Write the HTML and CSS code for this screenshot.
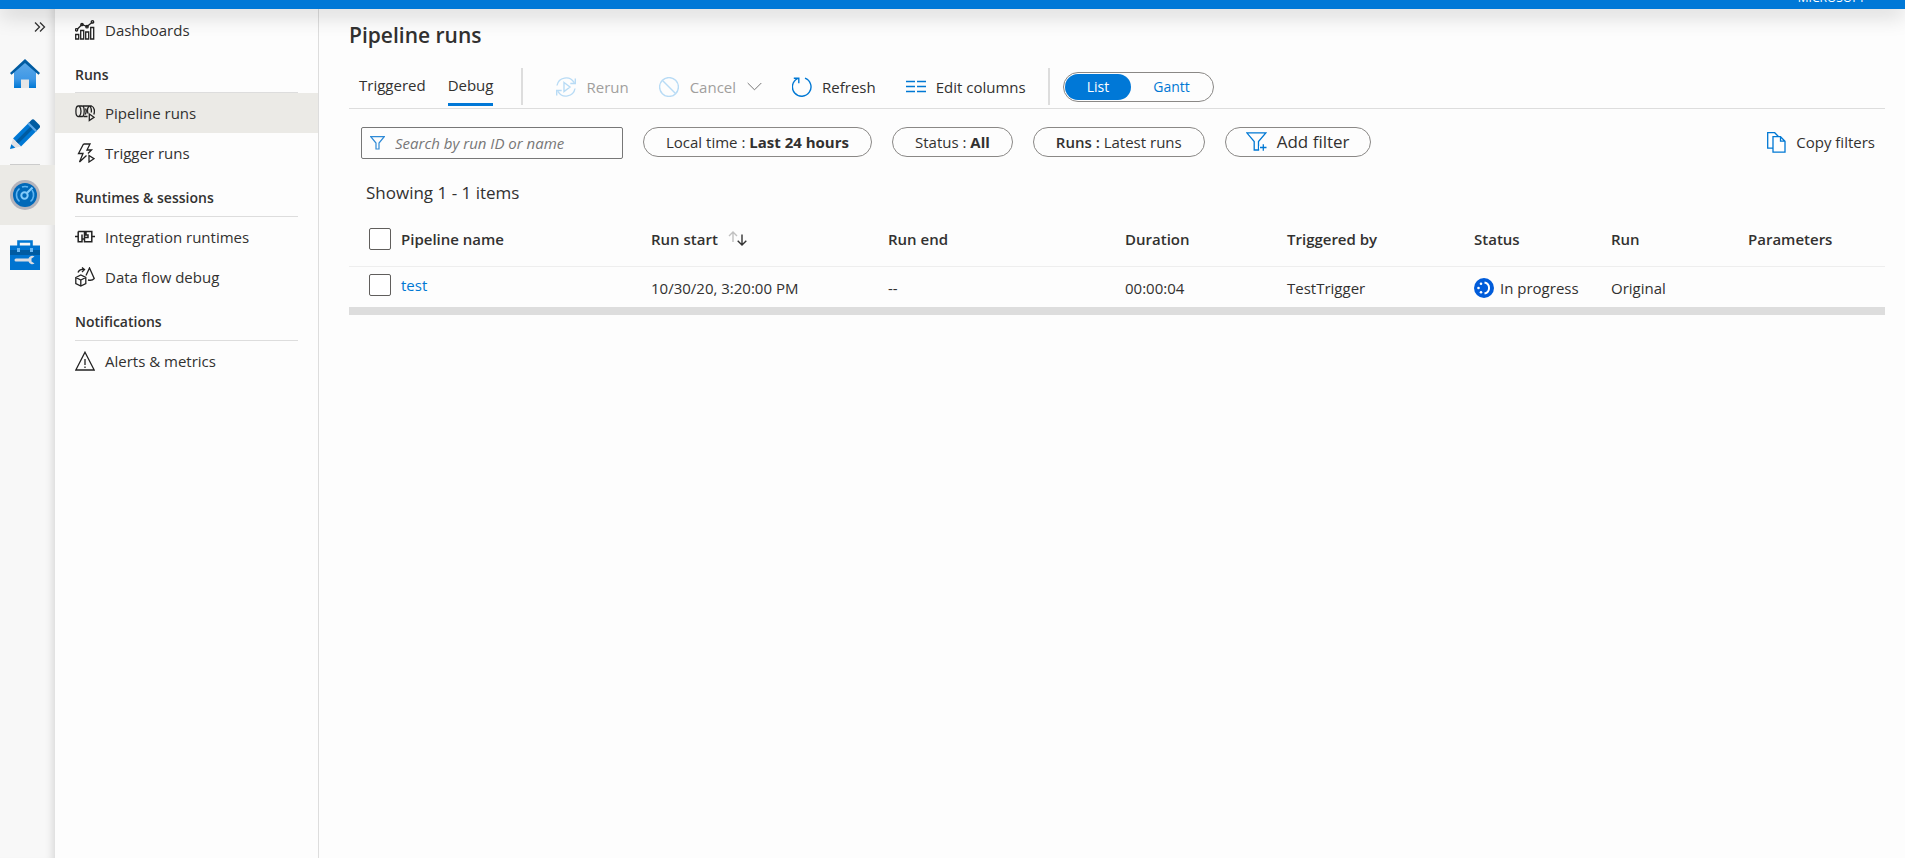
FILE: index.html
```html
<!DOCTYPE html>
<html lang="en">
<head>
<meta charset="utf-8">
<title>Pipeline runs</title>
<link rel="stylesheet" href="styles.css">
</head>
<body>
<header class="topbar"><span class="tenant">MICROSOFT</span></header>
<div class="shell">
  <nav class="rail" aria-label="Hubs">
    <button class="expand" aria-label="Expand"><svg width="12" height="10" viewBox="0 0 12 10" fill="none" stroke="#333" stroke-width="1.3"><path d="M1 .5 5.500 5 1 9.500M6 .5 10.500 5 6 9.500"/></svg></button>
    <a class="hub" href="#" aria-label="Home">
      <svg width="30" height="30" viewBox="0 0 30 30"><defs><linearGradient id="hg" x1="0" y1="0" x2="0" y2="1"><stop offset="0" stop-color="#5ea9e8"/><stop offset=".65" stop-color="#3f98e6"/><stop offset="1" stop-color="#0078d4"/></linearGradient></defs><path d="M4 12 15 3l11 9v17H4z" fill="url(#hg)"/><path d="M0 14 15 0l15 14-1.500 1.800L15 4 1.500 15.800z" fill="#005ba1"/><path d="M11 20.500h8V29h-8z" fill="#e6e6e6"/></svg>
    </a>
    <a class="hub" href="#" aria-label="Author">
      <svg width="30" height="30" viewBox="0 0 30 30"><path d="M3 19.500 19 3.500l8 8L11 27.500z" fill="#0078d4"/><path d="M5.800 22.300 21.800 6.300l2.400 2.400L8.200 24.700z" fill="#005ba1"/><path d="M18 4.500 21.200 1.200a2.500 2.500 0 0 1 3.500 0l4.500 4.500a2.500 2.500 0 0 1 0 3.500L26 12.500z" fill="#005ba1"/><path d="M17.500 5 19 3.500l8 8-1.500 1.500z" fill="#5ea9e8"/><path d="M3 19.500 11 27.500 0 30z" fill="#e0e0e4"/><path d="m1.300 25.300 4 3.500L0 30z" fill="#0078d4"/></svg>
    </a>
    <div class="rail-line"></div>
    <a class="hub hub-active" href="#" aria-label="Monitor">
      <svg width="30" height="30" viewBox="0 0 30 30" fill="none"><circle cx="15" cy="15" r="15" fill="#b4b4bc"/><circle cx="15" cy="15" r="12" fill="#0068b8"/><path d="M9.500 21.500a8.500 8.500 0 0 1 0-13M12 7a8.500 8.500 0 0 1 6 0M22 10a8.500 8.500 0 0 1-1.500 11.500" stroke="#5fb4f0" stroke-width="1.600"/><circle cx="14.500" cy="15.500" r="3.200" stroke="#83cbfa" stroke-width="2"/><path d="m17 13 5.500-5.500" stroke="#83cbfa" stroke-width="2.200"/></svg>
    </a>
    <a class="hub" href="#" aria-label="Manage">
      <svg width="30" height="30" viewBox="0 0 30 30"><path d="M8.500 6V1.500h13V6" fill="none" stroke="#0078d4" stroke-width="2.600"/><path d="M0 5.500h30V30H0z" fill="#0074d0"/><path d="M0 10h30v5H0z" fill="#005ba1"/><path d="M7 8h3v4H7zM20 8h3v4h-3z" fill="#6db8f2"/><path d="M6 18.500h12.500a4 4 0 0 1 6-2l-3 2v3l3 2a4 4 0 0 1-6-2H6a1.500 1.500 0 0 1 0-3z" fill="#d9dce2"/></svg>
    </a>
  </nav>

  <nav class="side" aria-label="Monitor">
    <a class="item" href="#"><svg class="ico" viewBox="0 0 20 20"><path d="M.7 14.500h3V19h-3zM5.700 10.500h3V19h-3zM10.700 12h3v7h-3zM15.700 7.500h3V19h-3z"/><path d="M2 9.500 7 4.500l5 2L17.500 2"/><circle cx="1.500" cy="9.800" r="1.200"/><circle cx="7" cy="4.500" r="1.200"/><circle cx="12" cy="6.700" r="1.200"/><circle cx="17.500" cy="1.900" r="1.200"/></svg>Dashboards</a>
    <h2 class="group group-first">Runs</h2>
    <a class="item item-active" href="#"><svg class="ico" viewBox="0 0 20 20"><path d="M3 3C.2 3.500.2 13 3 13.500h3M3 3h4.500C10 4 9.500 12.500 7.500 13.500H5M4.500 3.500c2 2 2 7.500 0 9.500M8 3h6.500M10.500 5.500c1 2 .8 4-.2 6M8.500 13.500h4M14.500 3c-2 1.500-2.300 5-1.500 7.500M14 3h2.500c3 1 3.500 5.500 2.300 8.500M15.300 3.500c1 1.800 1.300 3.500 1 6"/><path d="m14.300 11 4.700 3.300-4.700 3.200z"/></svg>Pipeline runs</a>
    <a class="item" href="#"><svg class="ico" viewBox="0 0 20 20"><path d="M8.500 1H15l-3 6h4.500L13 10.500M8.500 1l-5 9.500h4.500L4.500 19l7-6.500"/><path d="m14 12.500 5 3.200-5 3.300z"/></svg>Trigger runs</a>
    <h2 class="group">Runtimes &amp; sessions</h2>
    <a class="item" href="#"><svg class="ico" viewBox="0 0 20 20"><path d="M0 9.500h3M17 9.500h3M3.200 4.500h6.300v6H13V8h-2V4.500h5.800v10.300H9.500V12H7V7.500M3.200 4.500v10.300H7V12" stroke-width="1.500"/></svg>Integration runtimes</a>
    <a class="item" href="#"><svg class="ico" viewBox="0 0 20 20"><path d="M.8 10.500 5.800 8l5 2.500v6L5.800 19l-5-2.500zM.8 10.500l5 2.500 5-2.500M5.800 13v6M3 5.500C4 2.500 6 2 9 2.500M7 .5l2.500 2L7 5M11 8.500 14.500 1l4.700 10.500c-1.200 1.500-4 2-6.200 1.500"/></svg>Data flow debug</a>
    <h2 class="group">Notifications</h2>
    <a class="item" href="#"><svg class="ico" viewBox="0 0 20 20"><path d="M10 1.200 19.200 19H.8zM10 8v6M10 15.500v1.500"/></svg>Alerts &amp; metrics</a>
  </nav>

  <main class="main">
    <h1 class="title">Pipeline runs</h1>
    <div class="toolbar">
      <button class="tab">Triggered</button>
      <button class="tab tab-active">Debug</button>
      <span class="sep"></span>
      <button class="cmd cmd-rerun" disabled><svg class="cico" viewBox="0 0 20 20"><path d="M1 8.500A9.200 9.200 0 0 1 18 5.500M19 11.500A9.200 9.200 0 0 1 2 14.500M19.300 1.500v5h-5M.7 18.500v-5h5M8 5.500l6 4.500-6 4.500z"/></svg>Rerun</button>
      <button class="cmd cmd-cancel" disabled><svg class="cico" viewBox="0 0 20 20"><circle cx="10" cy="10" r="9.400"/><path d="m3.500 3.500 13 13"/></svg>Cancel<svg class="chev" width="15" height="9" viewBox="0 0 15 9"><path d="m.7 1 6.800 6.800L14.300 1" fill="none" stroke="#777"/></svg></button>
      <button class="cmd"><svg class="cico" viewBox="0 0 20 20"><path d="M13 1.200a9.300 9.300 0 1 1-7.500.4M1.800 1.200h5v5"/></svg>Refresh</button>
      <button class="cmd cmd-edit"><svg class="cico cico-wide" viewBox="0 0 20 20"><path d="M0 4.500h9M11 4.500h9M0 9.500h9M11 9.500h9M0 14.500h9M11 14.500h9"/></svg>Edit columns</button>
      <span class="sep"></span>
      <div class="toggle"><button class="opt opt-on">List</button><button class="opt">Gantt</button></div>
    </div>
    <div class="filters">
      <label class="search"><svg width="15" height="14" viewBox="0 0 15 14"><path d="M.8.700h13.400L9 7v6H6V7z" fill="none" stroke="#2f8ad6" stroke-width="1.200"/></svg><input type="text" placeholder="Search by run ID or name" aria-label="Search by run ID or name"></label>
      <button class="pill">Local time : <b>Last 24 hours</b></button>
      <button class="pill">Status : <b>All</b></button>
      <button class="pill"><span class="semi">Runs : </span>Latest runs</button>
      <button class="pill pill-add"><svg width="21" height="20" viewBox="0 0 21 20" fill="none" stroke="#0078d4" stroke-width="1.300"><path d="M.8.800h19L12.500 9.500V18H8.200V9.500z"/><path d="M13 15.500h8M17 11.500v8" stroke="#fdfdfd" stroke-width="3"/><path d="M14 15.500h6.500M17.300 12.200v6.600"/></svg>Add filter</button>
      <button class="copy"><svg width="19" height="21" viewBox="0 0 19 21" fill="#fff" stroke="#0078d4" stroke-width="1.300"><path d="M.7.700h7l4.500 4.500v11H.7z"/><path d="M6 4.700h7.500l4.500 4.500v11H6zM13.500 4.700v4.500H18" /></svg>Copy filters</button>
    </div>
    <p class="count">Showing 1 - 1 items</p>
    <table class="grid">
      <colgroup><col class="c-name"><col class="c-date"><col class="c-date"><col class="c-dur"><col class="c-trig"><col class="c-end"><col class="c-end"><col class="c-end"></colgroup>
      <thead><tr>
        <th><div class="name"><input class="box" type="checkbox" aria-label="Select all">Pipeline name</div></th>
        <th><div class="sort">Run start<svg width="19" height="15" viewBox="0 0 19 15" fill="none" stroke-width="1.400"><path d="M5 11V1M1 5l4-4 4 4" stroke="#c0c0c0"/><path d="M14 3.500V14M9.700 9.700 14 14l4.300-4.300" stroke="#333"/></svg></div></th>
        <th>Run end</th><th>Duration</th><th>Triggered by</th><th>Status</th><th>Run</th><th>Parameters</th>
      </tr></thead>
      <tbody><tr>
        <td class="first"><div class="name"><input class="box" type="checkbox" aria-label="Select test"><a href="#">test</a></div></td>
        <td>10/30/20, 3:20:00 PM</td><td>--</td><td>00:00:04</td><td>TestTrigger</td>
        <td><div class="status"><svg width="20" height="20" viewBox="0 0 20 20"><circle cx="10" cy="10" r="10" fill="#015cda"/><path d="M10.500 4.500a5.600 5.600 0 0 1 0 11" fill="none" stroke="#fff" stroke-width="2"/><circle cx="7" cy="5.800" r="1.300" fill="#fff"/><circle cx="4.500" cy="10" r="1.300" fill="#fff"/><circle cx="7" cy="14.200" r="1.300" fill="#fff"/></svg>In progress</div></td>
        <td>Original</td><td></td>
      </tr></tbody>
    </table>
  </main>
</div>
</body>
</html>
```
FILE: styles.css
```css
* { box-sizing: border-box; }
body {
  margin: 0;
  min-height: 100vh;
  display: flex;
  flex-direction: column;
  background: #fdfdfd;
  color: #323130;
  font: 15px/20px "Segoe UI", "Open Sans", sans-serif;
}
button { font: inherit; color: inherit; background: none; border: 0; padding: 0; }
a { text-decoration: none; color: inherit; }
svg { flex: none; display: block; }

.topbar {
  position: relative;
  z-index: 2;
  height: 9px;
  padding-right: 40px;
  display: flex;
  justify-content: flex-end;
  align-items: flex-end;
  overflow: hidden;
  background: #0078d7;
  color: #fff;
  font-size: 12px;
  line-height: 18px;
  box-shadow: 0 4px 22px rgba(0, 0, 0, .28);
}
.tenant { padding-bottom: 2px; }

.shell { flex: 1; display: flex; }

.rail {
  flex: none;
  width: 55px;
  display: flex;
  flex-direction: column;
  background: #f8f8f8;
  box-shadow: inset -9px 0 9px -7px rgba(0, 0, 0, .14);
}
.expand { height: 35px; padding: 0 10px 0 34px; display: flex; align-items: center; }
.hub { height: 60px; padding-left: 10px; display: flex; align-items: center; }
.hub-active { background: #ebeae6; }
.rail-line { width: 30px; height: 1px; margin-left: 10px; background: #ccc; }

.side {
  flex: none;
  width: 264px;
  padding-top: 1px;
  border-right: 1px solid #ddd;
}
.item { height: 40px; padding-left: 20px; display: flex; align-items: center; gap: 10px; }
.item-active { background: #ebeae6; }
.ico { width: 20px; height: 20px; fill: none; stroke: #222; stroke-width: 1.3; }
.group {
  height: 44px;
  margin: 0 20px;
  padding-top: 15px;
  border-bottom: 1px solid #ddd;
  font-size: 14px;
  font-weight: 600;
}
.group-first { height: 43px; }

.main { flex: 1; min-width: 0; padding: 12px 20px 0 30px; }
.title { margin: 0; font-size: 21px; line-height: 28px; font-weight: 600; }

.toolbar {
  height: 60px;
  display: flex;
  align-items: center;
  padding: 16px 0 0 10px;
  border-bottom: 1px solid #ddd;
}
.tab { height: 38px; margin-right: 22px; border-bottom: 3px solid transparent; }
.tab-active { border-color: #0078d7; }
.sep { width: 2px; height: 37px; margin: 0 13px 0 6px; background: #ddd; }
.cmd { display: flex; align-items: center; gap: 10px; margin-right: 30px; }
.cmd-rerun { margin-left: 20px; }
.cmd-cancel { gap: 11px; }
.cmd:disabled { color: #a19f9d; }
.cmd-edit { margin-right: 16px; }
.cico { width: 20px; height: 20px; fill: none; stroke: #0078d4; stroke-width: 1.4; }
.cmd:disabled .cico { stroke: #b8dbf5; }
.toggle { height: 30px; padding: 1px; display: flex; border: 1px solid #8a8886; border-radius: 15px; }
.opt { height: 26px; padding: 0 22px; border-radius: 13px; color: #0078d4; font-size: 14px; }
.opt-on { background: #0078d7; color: #fff; }

.filters { display: flex; align-items: flex-start; gap: 20px; padding: 18px 10px 0 12px; }
.search {
  width: 262px;
  height: 32px;
  padding: 0 8px;
  display: flex;
  align-items: center;
  gap: 10px;
  border: 1px solid #777;
  border-radius: 2px;
}
.search input { flex: 1; min-width: 0; border: 0; outline: 0; padding: 0; background: none; font: inherit; }
.search input::placeholder { color: #777; font-style: italic; }
.pill { height: 30px; padding: 0 22px; border: 1px solid #8a8886; border-radius: 15px; white-space: pre; }
.pill-add { padding: 0 20px; display: flex; align-items: center; gap: 10px; font-size: 17px; }
.semi { font-weight: 600; }
.copy { height: 30px; margin-left: auto; display: flex; align-items: center; gap: 10px; }

.count { margin: 0; padding: 22px 0 0 17px; font-size: 17px; line-height: 24px; }

.grid { width: 100%; margin-top: 7px; table-layout: fixed; border-collapse: collapse; border-bottom: 8px solid #ddd; }
.grid th, .grid td { padding: 0; text-align: left; white-space: nowrap; }
.grid th { height: 54px; font-weight: 600; border-bottom: 1px solid #eee; }
.grid td { height: 45px; padding-top: 2px; }
.grid td.first { padding: 0 0 3px; }
.grid a { color: #0078d4; }
.c-name { width: 302px; }
.c-date { width: 237px; }
.c-dur { width: 162px; }
.c-trig { width: 187px; }
.c-end { width: 137px; }
.name, .sort, .status { display: flex; align-items: center; gap: 10px; }
.status { gap: 6px; }
.name { padding-left: 20px; }
.box { appearance: none; width: 22px; height: 22px; margin: 0; border: 1px solid #605e5c; border-radius: 2px; background: #fff; }
```
